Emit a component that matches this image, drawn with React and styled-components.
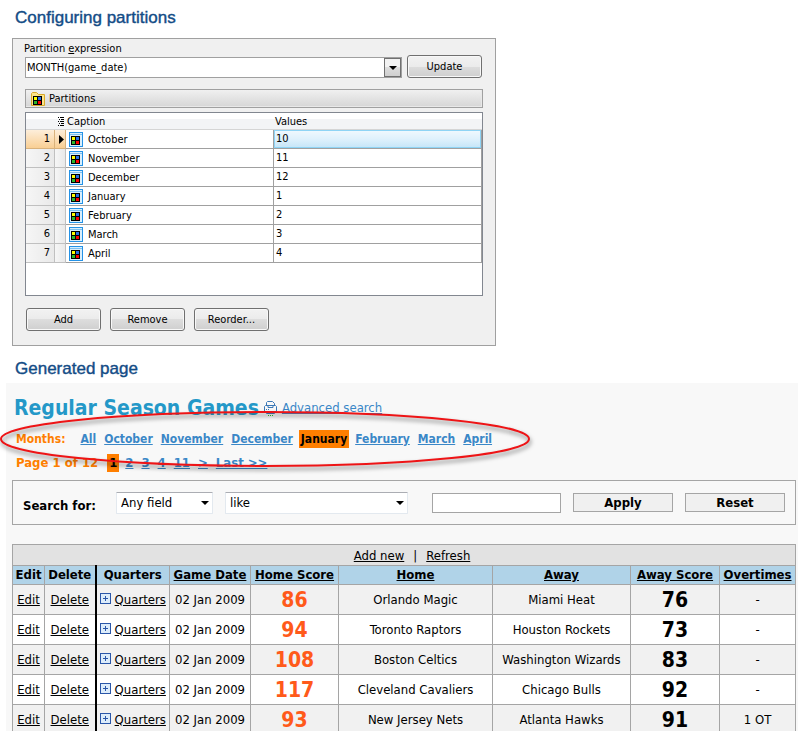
import { useState } from "react";
import styled, { createGlobalStyle, css } from "styled-components";

const GlobalStyle = createGlobalStyle`
  * {
    box-sizing: border-box;
  }

  body {
    margin: 0;
    background: #fff;
    color: #000;
    font-family: "DejaVu Sans Condensed", Tahoma, "DejaVu Sans", sans-serif;
    font-size: 13px;
  }

  button, input, select {
    font: inherit;
    color: inherit;
  }
`;

const Page = styled.main`
  display: flex;
  flex-direction: column;
  height: 100vh;
  padding: 0 2px 2px 6px;
  overflow: hidden;
`;

const SectionTitle = styled.h2`
  flex: none;
  margin: 0;
  padding: ${({ $above }) => $above}px 0 ${({ $below }) => $below}px 9px;
  color: #134c86;
  font: 17px/20px "Liberation Sans", Arial, sans-serif;
  -webkit-text-stroke: 0.4px #134c86;
`;

/* ---------- partition editor ---------- */

const Editor = styled.section`
  flex: none;
  display: flex;
  flex-direction: column;
  max-width: 484px;
  margin-left: 6px;
  padding: 4px 12px 14px;
  border: 1px solid #a0a0a0;
  background: #f0f0f0;
  font-size: 11px;
  line-height: 14px;
`;

const Label = styled.label`
  margin-left: -1px;
  line-height: 12px;
`;

const ExpressionRow = styled.div`
  display: flex;
  align-items: flex-end;
  gap: 5px;
  padding-right: 1px;
`;

const Combo = styled.div`
  display: flex;
  flex: 1;
  height: 21px;
  border: 1px solid #a0a0a0;
  background: #fff;
`;

const ComboInput = styled.input`
  flex: 1;
  min-width: 0;
  padding: 0 1px;
  border: 0;
  outline: 0;
  background: transparent;
`;

const ComboArrow = styled.button`
  display: flex;
  align-items: center;
  justify-content: center;
  width: 17px;
  padding: 0;
  border: 1px solid #707070;
  background: linear-gradient(#f2f2f2 50%, #dddddd 50%, #cfcfcf);
`;

const WinButton = styled.button`
  width: 75px;
  height: 23px;
  padding: 0;
  border: 1px solid #707070;
  border-radius: 3px;
  background: linear-gradient(#f2f2f2, #ebebeb 50%, #dddddd 50%, #cfcfcf);
  box-shadow: inset 0 0 0 1px #f8f8f8;
`;

const GroupHeader = styled.div`
  display: flex;
  align-items: center;
  gap: 4px;
  height: 19px;
  margin: 11px 0 4px;
  padding: 1px 0 0 5px;
  border: 1px solid #a0a0a0;
  background: linear-gradient(#f0f0f0, #d6d6d6);
  box-shadow: inset -1px -1px 0 #e8e8e8;
`;

const GridFrame = styled.div`
  min-height: 184px;
  border: 1px solid #828790;
  background: #fff;
`;

const Grid = styled.table`
  width: 100%;
  table-layout: fixed;
  border-collapse: separate;
  border-spacing: 0;
`;

const GridHead = styled.th`
  height: 17px;
  padding: ${({ $first }) => ($first ? "0 2px 0 0" : "1px 1px 0")};
  border-bottom: 1px solid #d5d5d5;
  background: linear-gradient(#fff 40%, #f3f4f6 40%, #f3f4f6);
  font-weight: normal;
  line-height: 15px;
  text-align: ${({ $first }) => ($first ? "right" : "left")};

  svg {
    display: inline-block;
    vertical-align: middle;
  }
`;

const GridCell = styled.td`
  height: 19px;
  padding: 0 2px;
  border-right: 1px solid #a0a0a0;
  border-bottom: 1px solid #a0a0a0;
  line-height: 16px;

  ${({ $active }) =>
    $active &&
    css`
      background: linear-gradient(#f1f9fe, #dff1fc 50%, #c4e5f8);
      box-shadow: inset 0 0 0 1px #8fd4f5;
    `}
`;

const MarkerCell = styled(GridCell)`
  padding: 0 4px 0 0;
  border-color: #c0c0c0;
  background: ${({ $current }) =>
    $current
      ? "linear-gradient(#fdeeda, #f9cf94)"
      : "linear-gradient(90deg, #f6f6f6, #e9e9e9)"};
  text-align: right;

  ${({ $current }) => $current && "border-color: #d9b27c;"}

  svg {
    display: block;
    margin-left: 4px;
  }
`;

const Caption = styled.span`
  display: flex;
  align-items: center;
  gap: 5px;
  padding: 1px 0 0 1px;
  line-height: 15px;
`;

const EditorActions = styled.div`
  display: flex;
  gap: 9px;
  margin: 12px 0 0 1px;
`;

/* ---------- generated page ---------- */

const Generated = styled.section`
  flex: 1;
  min-height: 0;
  padding: 0 2px 0 6px;
  background: #f8f8f8;
  overflow-x: visible;
  overflow-y: clip;
`;

const Heading = styled.header`
  display: flex;
  align-items: center;
  gap: 5px;
  padding: 7px 0 0 2px;
  height: 43px;
`;

const PageTitle = styled.h1`
  margin: 0;
  color: #2498c8;
  font-size: 21px;
  line-height: 28px;
`;

const SearchLink = styled.a`
  color: #3a87c7;
  line-height: 16px;
`;

const Highlighted = styled.div`
  position: relative;
`;

const Pager = styled.nav`
  display: flex;
  align-items: center;
  gap: 8px;
  height: 24px;
  padding: 4px 0 2px 4px;
  color: #ff7f00;
  font-size: ${({ $size }) => $size}px;
  font-weight: bold;
  line-height: 18px;
`;

const PagerLabel = styled.span`
  margin-right: ${({ $space }) => $space}px;
`;

const PagerLink = styled.a`
  color: #3a87c7;

  ${({ $current }) =>
    $current &&
    css`
      margin: 0 -2px;
      padding: 0 2px;
      background: #ff7f00;
      color: #000;
      text-decoration: none;
    `}
`;

const Oval = styled.svg`
  position: absolute;
  top: -18px;
  left: -12px;
  width: 536px;
  height: 66px;
  overflow: visible;
  pointer-events: none;
  filter: drop-shadow(1px 3px 2px rgba(0, 0, 0, 0.5));
`;

const SearchForm = styled.form`
  display: flex;
  align-items: center;
  gap: 12px;
  height: 45px;
  margin: 6px 0 19px;
  padding: 0 10px;
  border: 1px solid #a5a5a5;
`;

const SearchLabel = styled.label`
  width: 81px;
  padding-top: 5px;
  font-weight: bold;
`;

const SelectBox = styled.span`
  position: relative;
  width: ${({ $width }) => $width}px;

  svg {
    position: absolute;
    top: 9px;
    right: 4px;
    pointer-events: none;
  }
`;

const Select = styled.select`
  appearance: none;
  display: block;
  width: 100%;
  height: 22px;
  padding: 0 4px;
  border: 1px solid #e3e9ef;
  border-top-color: #abadb3;
  border-radius: 1px;
  background: #fff;
`;

const SearchInput = styled.input`
  width: 129px;
  height: 20px;
  margin-left: 12px;
  border: 1px solid #a5a5a5;
  background: #fff;
`;

const FlatButton = styled.button`
  width: 100px;
  height: 19px;
  padding: 0;
  border: 1px solid #a5a5a5;
  background: #f0f0f0;
  font-weight: bold;
  line-height: 16px;
`;

const Games = styled.table`
  width: 100%;
  table-layout: fixed;
  border-collapse: collapse;
  text-align: center;
  line-height: 16px;

  a {
    color: #000;
  }
`;

const Toolbar = styled.td`
  height: 21px;
  padding: 1px 0 0 16px;
  border: 1px solid #a5a5a5;
  background: #e2e2e2;

  a {
    margin: 0 9px;
  }
`;

const HeadCell = styled.th`
  height: 19px;
  padding: 0;
  border: 1px solid #a5a5a5;
  background: #b0d3e8;
  white-space: nowrap;
  ${({ $divider }) => $divider && "border-right: 2px solid #000;"}
`;

const GameRow = styled.tr`
  background: #fff;

  &:nth-child(odd) {
    background: #f1f1f1;
  }
`;

const Cell = styled.td`
  height: 30px;
  padding: 0;
  border: 1px solid #a5a5a5;
  white-space: nowrap;
  ${({ $divider }) => $divider && "border-right: 2px solid #000;"}
`;

const ScoreCell = styled(Cell)`
  color: ${({ $home }) => ($home ? "#ff5a1a" : "#000")};
  font-size: 21px;
  font-weight: bold;
  line-height: 26px;
`;

const Details = styled.span`
  display: flex;
  justify-content: center;
  gap: 4px;

  svg {
    margin-top: 1px;
  }
`;

const Arrow = () => (
  <svg width="8" height="4" viewBox="0 0 8 4" aria-hidden="true">
    <path d="M0 0h8L4 4z" fill="#000" />
  </svg>
);

const Squares = ({ x, y }) => (
  <g transform={`translate(${x} ${y})`} shapeRendering="crispEdges">
    <rect width="9" height="9" fill="#000" />
    <rect x="1" y="1" width="3" height="3" fill="#ff0" />
    <rect x="5" y="1" width="3" height="3" fill="#2a6fe0" />
    <rect x="1" y="5" width="3" height="3" fill="#2cb52c" />
    <rect x="5" y="5" width="3" height="3" fill="#f00" />
  </g>
);

const FolderIcon = () => (
  <svg width="14" height="14" viewBox="0 0 14 14" aria-hidden="true">
    <path d="M.5 13.5v-12l1-1h4l2 2h6v11z" fill="#fde58a" stroke="#d9a92c" />
    <Squares x="2" y="4" />
  </svg>
);

const PartitionIcon = () => (
  <svg width="14" height="15" viewBox="0 0 14 15" aria-hidden="true">
    <rect x=".5" y=".5" width="13" height="14" fill="#d8eefc" stroke="#2492e6" />
    <path d="M1 2.5h12" stroke="#7cc1f2" />
    <Squares x="2" y="4" />
  </svg>
);

const ListIcon = () => (
  <svg width="6" height="9" viewBox="0 0 6 9" shapeRendering="crispEdges" aria-hidden="true">
    <path d="M0 .5h1M2 .5h4M1 2.5h1M3 2.5h3M0 4.5h1M2 4.5h4M1 6.5h1M3 6.5h3M0 8.5h1M2 8.5h4" stroke="#000" />
  </svg>
);

const PrinterIcon = () => (
  <svg width="13" height="15" viewBox="0 0 13 15" fill="none" aria-hidden="true">
    <path d="M2.5 4.5v-3l1-1h5l2 2v2M.5 10.5v-5l1-1h10l1 1v5zM4 4.5v2h5v-2M2.5 10.5v2h8v-2" stroke="#3a78b8" />
    <path d="M2 8.5h1M4 8.5h1" stroke="#3a78b8" />
    <path d="M4 14.5h1M6 14.5h1M8 14.5h1" stroke="#2cc52c" />
  </svg>
);

const PlusIcon = () => (
  <svg width="11" height="11" viewBox="0 0 11 11" aria-hidden="true">
    <rect x=".5" y=".5" width="10" height="10" fill="#dcecfa" stroke="#2a56a8" />
    <path d="M3 5.5h5M5.5 3v5" stroke="#2a56a8" />
  </svg>
);

const partitions = [
  ["October", 10],
  ["November", 11],
  ["December", 12],
  ["January", 1],
  ["February", 2],
  ["March", 3],
  ["April", 4],
];

const months = ["All", ...partitions.map(([name]) => name)];
const pages = ["1", "2", "3", "4", "11", ">", "Last >>"];

const columns = [
  { name: "Edit", width: 32 },
  { name: "Delete", width: 51, divider: true },
  { name: "Quarters", width: 74 },
  { name: "Game Date", width: 81, sortable: true },
  { name: "Home Score", width: 88, sortable: true },
  { name: "Home", width: 154, sortable: true },
  { name: "Away", width: 138, sortable: true },
  { name: "Away Score", width: 89, sortable: true },
  { name: "Overtimes", width: 76, sortable: true },
];

const games = [
  { homeScore: 86, home: "Orlando Magic", away: "Miami Heat", awayScore: 76, overtimes: "-" },
  { homeScore: 94, home: "Toronto Raptors", away: "Houston Rockets", awayScore: 73, overtimes: "-" },
  { homeScore: 108, home: "Boston Celtics", away: "Washington Wizards", awayScore: 83, overtimes: "-" },
  { homeScore: 117, home: "Cleveland Cavaliers", away: "Chicago Bulls", awayScore: 92, overtimes: "-" },
  { homeScore: 93, home: "New Jersey Nets", away: "Atlanta Hawks", awayScore: 91, overtimes: "1 OT" },
];

function PartitionEditor() {
  const [expression, setExpression] = useState("MONTH(game_date)");

  return (
    <Editor>
      <Label htmlFor="expression">
        Partition <u>e</u>xpression
      </Label>
      <ExpressionRow>
        <Combo>
          <ComboInput id="expression" value={expression} onChange={(e) => setExpression(e.target.value)} />
          <ComboArrow type="button" aria-label="Show expressions">
            <Arrow />
          </ComboArrow>
        </Combo>
        <WinButton type="button">Update</WinButton>
      </ExpressionRow>
      <GroupHeader>
        <FolderIcon />
        Partitions
      </GroupHeader>
      <GridFrame>
        <Grid>
          <colgroup>
            <col width="29" />
            <col width="11" />
            <col width="208" />
            <col />
          </colgroup>
          <thead>
            <tr>
              <GridHead colSpan={2} $first>
                <ListIcon />
              </GridHead>
              <GridHead>Caption</GridHead>
              <GridHead>Values</GridHead>
            </tr>
          </thead>
          <tbody>
            {partitions.map(([name, value], i) => (
              <tr key={name}>
                <MarkerCell $current={i === 0}>{i + 1}</MarkerCell>
                <MarkerCell $current={i === 0}>
                  {i === 0 && (
                    <svg width="5" height="9" viewBox="0 0 5 9" aria-hidden="true">
                      <path d="M0 0l5 4.5L0 9z" />
                    </svg>
                  )}
                </MarkerCell>
                <GridCell>
                  <Caption>
                    <PartitionIcon />
                    {name}
                  </Caption>
                </GridCell>
                <GridCell $active={i === 0}>{value}</GridCell>
              </tr>
            ))}
          </tbody>
        </Grid>
      </GridFrame>
      <EditorActions>
        <WinButton type="button">Add</WinButton>
        <WinButton type="button">Remove</WinButton>
        <WinButton type="button">Reorder...</WinButton>
      </EditorActions>
    </Editor>
  );
}

function GamesTable() {
  return (
    <Games>
      <colgroup>
        {columns.map(({ name, width }) => (
          <col key={name} width={width} />
        ))}
      </colgroup>
      <thead>
        <tr>
          <Toolbar colSpan={columns.length}>
            <a href="#add">Add new</a>|<a href="#refresh">Refresh</a>
          </Toolbar>
        </tr>
        <tr>
          {columns.map(({ name, sortable, divider }) => (
            <HeadCell key={name} $divider={divider}>
              {sortable ? <a href="#sort">{name}</a> : name}
            </HeadCell>
          ))}
        </tr>
      </thead>
      <tbody>
        {games.map((game) => (
          <GameRow key={game.home}>
            <Cell><a href="#edit">Edit</a></Cell>
            <Cell $divider><a href="#delete">Delete</a></Cell>
            <Cell>
              <Details>
                <PlusIcon />
                <a href="#quarters">Quarters</a>
              </Details>
            </Cell>
            <Cell>02 Jan 2009</Cell>
            <ScoreCell $home>{game.homeScore}</ScoreCell>
            <Cell>{game.home}</Cell>
            <Cell>{game.away}</Cell>
            <ScoreCell>{game.awayScore}</ScoreCell>
            <Cell>{game.overtimes}</Cell>
          </GameRow>
        ))}
      </tbody>
    </Games>
  );
}

const App = () => (
  <>
    <GlobalStyle />
    <Page>
      <SectionTitle $above={8} $below={10}>Configuring partitions</SectionTitle>
      <PartitionEditor />
      <SectionTitle $above={13} $below={4}>Generated page</SectionTitle>
      <Generated>
        <Heading>
          <PageTitle>Regular Season Games</PageTitle>
          <PrinterIcon />
          <SearchLink href="#search">Advanced search</SearchLink>
        </Heading>
        <Highlighted>
          <Pager $size={12} aria-label="Months">
            <PagerLabel $space={7}>Months:</PagerLabel>
            {months.map((month) => (
              <PagerLink key={month} href="#month" $current={month === "January"}>
                {month}
              </PagerLink>
            ))}
          </Pager>
          <Pager $size={13} aria-label="Pages">
            <PagerLabel $space={3}>Page 1 of 12</PagerLabel>
            {pages.map((page) => (
              <PagerLink key={page} href="#page" $current={page === "1"}>
                {page}
              </PagerLink>
            ))}
          </Pager>
          <Oval viewBox="0 0 536 66" aria-hidden="true">
            <ellipse cx="265" cy="31" rx="264" ry="27" fill="none" stroke="#ee1416" strokeWidth="2" />
          </Oval>
        </Highlighted>
        <SearchForm onSubmit={(e) => e.preventDefault()}>
          <SearchLabel htmlFor="term">Search for:</SearchLabel>
          <SelectBox $width={97}>
            <Select aria-label="Field">
              <option>Any field</option>
            </Select>
            <Arrow />
          </SelectBox>
          <SelectBox $width={183}>
            <Select aria-label="Condition">
              <option>like</option>
            </Select>
            <Arrow />
          </SelectBox>
          <SearchInput id="term" />
          <FlatButton>Apply</FlatButton>
          <FlatButton type="reset">Reset</FlatButton>
        </SearchForm>
        <GamesTable />
      </Generated>
    </Page>
  </>
);

export default App;
